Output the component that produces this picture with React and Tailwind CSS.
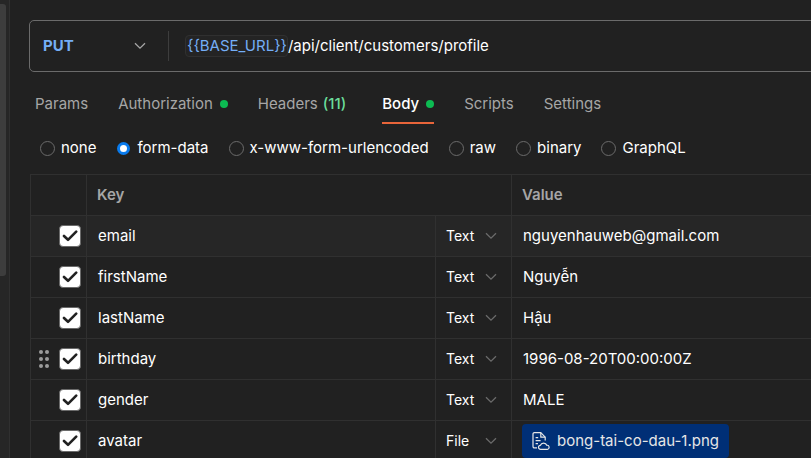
import React from "react";

const tabs = [
  { name: "Params" },
  { name: "Authorization", dot: true },
  { name: "Headers", count: 11 },
  { name: "Body", dot: true, active: true },
  { name: "Scripts" },
  { name: "Settings" },
];

const bodyTypes = ["none", "form-data", "x-www-form-urlencoded", "raw", "binary", "GraphQL"];

const rows = [
  { key: "email", type: "Text", value: "nguyenhauweb@gmail.com", highlighted: true },
  { key: "firstName", type: "Text", value: "Nguyễn" },
  { key: "lastName", type: "Text", value: "Hậu" },
  { key: "birthday", type: "Text", value: "1996-08-20T00:00:00Z", grip: true },
  { key: "gender", type: "Text", value: "MALE" },
  { key: "avatar", type: "File", value: "bong-tai-co-dau-1.png" },
];

function Chevron({ className }) {
  return (
    <svg viewBox="0 0 12 8" className={"pointer-events-none h-2 w-3 shrink-0 " + className} fill="none" stroke="currentColor" strokeWidth="1.3" aria-hidden="true">
      <path d="M1 1.2 6 6.2 11 1.2" />
    </svg>
  );
}

function Grip() {
  return (
    <svg viewBox="0 0 10 18" className="h-[18px] w-[10px]" fill="#9b9b9b" aria-hidden="true">
      {[2, 9, 16].map((y) => (
        <g key={y}>
          <circle cx="2" cy={y} r="2" />
          <circle cx="8" cy={y} r="2" />
        </g>
      ))}
    </svg>
  );
}

function FileCloudIcon() {
  return (
    <svg viewBox="0 0 18 18" className="h-[18px] w-[18px] shrink-0" fill="none" stroke="currentColor" strokeWidth="1.2" strokeLinejoin="round" aria-hidden="true">
      <path d="M5 15.9H2.4a1.4 1.4 0 0 1-1.4-1.4V2a1.4 1.4 0 0 1 1.4-1.4h6.4l4.4 4.6v3.2" />
      <path d="M8.8.8v4.4h4.4M3.6 5.6h2.6M3.6 8.6h5M3.6 11.6h2.4" />
      <path d="M8.6 17.3a2 2 0 0 1-.2-4 3.4 3.4 0 0 1 6.4 0 2 2 0 0 1 .6 4z" />
    </svg>
  );
}

function CheckBox({ label }) {
  return (
    <span className="grid h-[22px] w-[22px] grid-cols-1 place-items-center">
      <input
        type="checkbox"
        defaultChecked
        aria-label={label}
        className="peer col-start-1 row-start-1 h-[22px] w-[22px] appearance-none rounded-[4px] border border-[#6b6b6b] checked:bg-white"
      />
      <svg viewBox="0 0 16 12" className="pointer-events-none col-start-1 row-start-1 h-3 w-4 opacity-0 peer-checked:opacity-100" fill="none" stroke="#212121" strokeWidth="2.6" strokeLinecap="round" strokeLinejoin="round" aria-hidden="true">
        <path d="M2 6 6 9.8 14.2 1.6" />
      </svg>
    </span>
  );
}

export default function App() {
  return (
    <div className="flex h-screen overflow-hidden bg-[#212121] font-['Inter','Noto_Sans',sans-serif] text-[15px] leading-5 text-white">
      <aside className="w-[10px] shrink-0 border-r border-[#303030] bg-[#262626] pt-1">
        <div className="h-[272px] w-[6px] rounded-r-[3px] bg-[#3d3d3d]" />
      </aside>

      <main className="min-w-0 flex-1 pt-5 pl-5">
        <form className="-mr-2 ml-[-1px] flex h-[52px] items-center rounded-[5px] border border-[#6b6b6b]">
          <label className="grid w-[138px] shrink-0 grid-cols-1 items-center">
            <select aria-label="Method" className="col-start-1 row-start-1 w-full appearance-none bg-transparent pl-[13px] font-bold text-[#74aef6] outline-none">
              <option>PUT</option>
              <option>GET</option>
              <option>POST</option>
            </select>
            <Chevron className="col-start-1 row-start-1 mr-[22px] justify-self-end text-[#a6a6a6]" />
          </label>
          <span className="h-[30px] w-px bg-[#3d3d3d]" />
          <span className="ml-4 rounded-[4px] border border-[#303030] bg-[#242424] pl-px text-[#74aef6]">{"{{BASE_URL}}"}</span>
          <input aria-label="Request URL" defaultValue="/api/client/customers/profile" className="min-w-0 flex-1 bg-transparent outline-none" />
        </form>

        <nav className="mt-5 ml-[5px] flex gap-[30px]">
          {tabs.map((t) => (
            <button
              key={t.name}
              type="button"
              className={"flex h-8 shrink-0 items-start border-b-2 pt-[2px] " + (t.active ? "border-[#e8653a] font-medium text-white" : "border-transparent text-[#a6a6a6]")}
            >
              <span>{t.name}</span>
              {t.count && <span className="mr-[6px] ml-[5px] font-medium text-[#6bdd9a]">({t.count})</span>}
              {t.dot && <span className="mt-[6px] ml-[7px] h-2 w-2 rounded-full bg-[#0cbb52]" />}
            </button>
          ))}
        </nav>

        <div className="mt-[14px] ml-[10px] flex gap-5">
          {bodyTypes.map((t) => (
            <label key={t} className="flex shrink-0 items-center gap-[6px]">
              <input
                type="radio"
                name="body-type"
                defaultChecked={t === "form-data"}
                className="h-[15px] w-[15px] appearance-none rounded-full border border-[#6b6b6b] checked:mx-px checked:h-[13px] checked:w-[13px] checked:border-[3px] checked:border-[#097bed] checked:bg-white"
              />
              {t}
            </label>
          ))}
        </div>

        <table className="mt-4 w-full table-fixed border-collapse border border-r-0 border-[#303030] text-left">
          <colgroup>
            <col className="w-[56px]" />
            <col className="w-[349px]" />
            <col className="w-[76px]" />
            <col />
          </colgroup>
          <thead>
            <tr className="h-[41px] border-b border-[#303030] text-[#a6a6a6]">
              <th className="border-r border-[#303030]" />
              <th colSpan={2} className="border-r border-[#303030] px-[10px] font-semibold">Key</th>
              <th className="px-[10px] font-semibold">Value</th>
            </tr>
          </thead>
          <tbody>
            {rows.map((r) => (
              <tr key={r.key} className={"h-[41px] border-b border-[#303030] " + (r.highlighted ? "bg-[#262626]" : "")}>
                <td className="border-r border-[#303030] p-0">
                  <div className="flex items-center justify-end gap-[10px] pr-[5px]">
                    {r.grip && <Grip />}
                    <CheckBox label={"Include " + r.key} />
                  </div>
                </td>
                <td className="border-r border-[#303030] px-[11px] py-0">{r.key}</td>
                <td className="border-r border-[#303030] p-0">
                  <label className="grid grid-cols-1 items-center">
                    <select defaultValue={r.type} aria-label={"Type of " + r.key} className="col-start-1 row-start-1 w-full appearance-none bg-transparent pl-[10px] text-sm leading-5 outline-none">
                      <option>Text</option>
                      <option>File</option>
                    </select>
                    <Chevron className="col-start-1 row-start-1 mr-[14px] justify-self-end text-[#6b6b6b]" />
                  </label>
                </td>
                <td className="px-[11px] py-0">
                  {r.type === "File" ? (
                    <span className="-ml-px inline-flex h-[34px] items-center gap-[7px] rounded-[4px] bg-[#002f76] px-[10px] align-middle text-[#e6e6e6]">
                      <FileCloudIcon />
                      {r.value}
                    </span>
                  ) : (
                    r.value
                  )}
                </td>
              </tr>
            ))}
          </tbody>
        </table>
      </main>
    </div>
  );
}
